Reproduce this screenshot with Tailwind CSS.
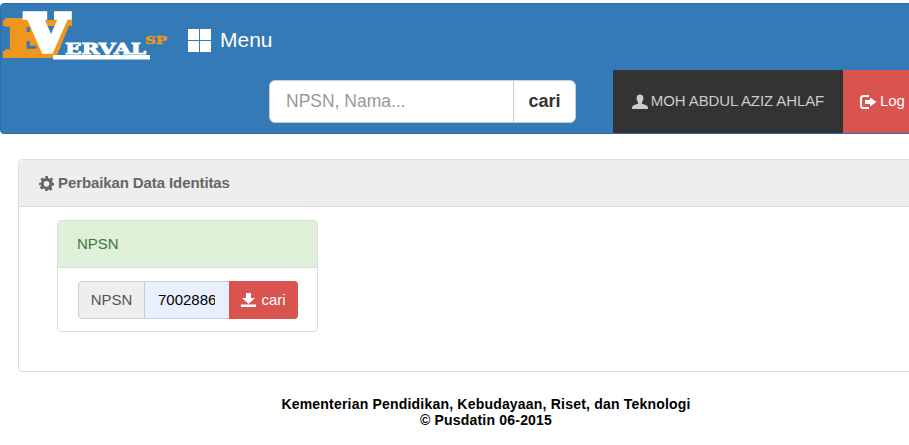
<!DOCTYPE html>
<html>
<head>
<meta charset="utf-8">
<script src="https://cdn.jsdelivr.net/npm/@tailwindcss/browser@4"></script>
</head>
<body class="bg-white font-['Liberation_Sans',Arial,sans-serif] text-[15px] text-[#333]">
<div class="w-[909px] h-[445px] overflow-hidden">
<div class="w-[972px] pt-[3px]">
  <nav class="h-[131px] bg-[#337ab7] border border-[#2e6da4] rounded-[4px] flex flex-col">
    <div class="h-[66px] flex items-start">
      <svg class="shrink-0" width="170" height="62" viewBox="1 4 170 62">
        <rect x="3" y="20" width="69" height="6" fill="#ee961d"/>
        <rect x="12" y="20" width="11" height="38" fill="#ee961d"/>
        <rect x="3" y="51" width="50" height="7" fill="#ee961d"/>
        <text x="6" y="55" font-family="DejaVu Serif" font-weight="700" font-size="46" fill="#ee961d" stroke="#ee961d" stroke-width="6" stroke-linejoin="miter" textLength="40" lengthAdjust="spacingAndGlyphs">E</text>
        <polygon points="64,20 72,20 72,26 69,26 56,58 50,58" fill="#ee961d"/>
        <text x="26" y="51" font-family="DejaVu Serif" font-weight="700" font-size="50" fill="#fff" stroke="#fff" stroke-width="5.500" stroke-linejoin="miter" textLength="42" lengthAdjust="spacingAndGlyphs">V</text>
        <rect x="53" y="55" width="97" height="4.500" fill="#fff"/>
        <text x="65" y="54" font-family="DejaVu Serif" font-weight="700" font-size="15" fill="#fff" stroke="#fff" stroke-width="0.800" textLength="81" lengthAdjust="spacingAndGlyphs">ERVAL</text>
        <text x="145" y="44" font-family="DejaVu Serif" font-weight="700" font-size="11" fill="#ee961d" stroke="#ee961d" stroke-width="0.500" textLength="22" lengthAdjust="spacingAndGlyphs">SP</text>
      </svg>
      <div class="ml-[17px] mt-[21px] flex items-center text-white text-[21px] leading-[30px]">
        <svg class="mr-[9px]" width="23" height="23" viewBox="0 0 23 23" fill="#fff">
          <rect width="11" height="11"/><rect x="12" width="11" height="11"/><rect y="12" width="11" height="11"/><rect x="12" y="12" width="11" height="11"/>
        </svg>
        Menu
      </div>
    </div>
    <div class="h-[63px] flex">
      <div class="ml-[268px] mt-[10px] w-[307px] h-[43px] flex bg-white rounded-[6px] text-[18px] border border-[#ccc]">
        <div class="w-[244px] pl-[16px] text-[17.5px] text-[#999] leading-[41px] border-r border-[#ccc]">NPSN, Nama...</div>
        <div class="flex-1 text-center font-bold text-[#333] leading-[41px]">cari</div>
      </div>
      <div class="ml-[37px] w-[230px] bg-[#333] text-[#ccc] flex items-center justify-center gap-[3px] tracking-[-0.1px]">
        <svg width="16" height="16" viewBox="0 0 16 16" fill="#ccc"><path d="M8 0.5c2.400 0 3.600 1.800 3.400 4.200-.1 1.400-.7 2.600-1.500 3.300v1.500c.5.500 4.600 1.500 5.600 2.700.4.600.5 1.800.5 2.800H0c0-1 .1-2.200.5-2.800 1-1.200 5.100-2.200 5.600-2.700V8c-.8-.7-1.400-1.900-1.500-3.300C4.400 2.300 5.600.5 8 .5z"/></svg>
        MOH ABDUL AZIZ AHLAF
      </div>
      <div class="flex-1 bg-[#d9534f] text-white flex items-center pl-[17px] gap-[3px] whitespace-nowrap">
        <svg width="17" height="14" viewBox="0 0 17 14" fill="#fff"><path d="M3 0h6v2H3.500C2.700 2 2 2.700 2 3.500v7c0 .8.700 1.500 1.500 1.500H9v2H3c-1.700 0-3-1.300-3-3V3c0-1.700 1.300-3 3-3z"/><path d="M10 2.500 16.500 7 10 11.500V9H5V5h5z"/></svg>
        <span class="tracking-[-0.1px] [word-spacing:3px]">Log Out</span>
      </div>
    </div>
  </nav>
  <section class="mt-[25px] mx-[18px] h-[213px] bg-white border border-[#ddd] rounded-[4px]">
    <header class="h-[47px] bg-[#eee] border-b border-[#ddd] rounded-t-[4px] pl-[20px] flex items-center gap-[4px] font-bold text-[#666] tracking-[-0.1px]">
      <svg width="15" height="15" viewBox="0 0 24 24" fill="#666"><path fill-rule="evenodd" d="M10 0h4l.7 3.300 2.200.9L19.800 2.400l2.800 2.800-1.800 2.900.9 2.200L24 11v4l-3.300.6-.9 2.200 1.800 2.900-2.800 2.800-2.900-1.800-2.200.9L14 24h-4l-.7-3.300-2.200-.9-2.900 1.800-2.800-2.800 1.800-2.900-.9-2.200L0 15v-4l3.300-.7.900-2.200L2.400 5.200l2.800-2.800 2.900 1.800 2.200-.9zM12 8a4.500 4.500 0 1 0 0 9 4.500 4.500 0 0 0 0-9z"/></svg>
      Perbaikan Data Identitas
    </header>
    <div class="ml-[38px] mt-[13px] w-[261px] h-[112px] border border-[#ddd] rounded-[4px] overflow-hidden">
      <div class="h-[47px] bg-[#dff0d8] border-b border-[#ddd] text-[#3c763d] pl-[19px] leading-[46px]">NPSN</div>
      <div class="pl-[20px] pt-[13px]">
        <div class="w-[220px] h-[38px] flex rounded-[4px]">
          <div class="w-[67px] bg-[#eee] border border-[#ccc] rounded-l-[4px] text-center leading-[36px] text-[#555]">NPSN</div>
          <div class="w-[84px] bg-[#e8f0fe] border-y border-[#ccc] pl-[13px] leading-[36px] text-black">
            <div class="w-[57px] overflow-hidden whitespace-nowrap">700288600</div>
          </div>
          <div class="flex-1 bg-[#d9534f] rounded-r-[4px] text-white flex items-center justify-center gap-[5px]">
            <svg width="15" height="14" viewBox="0 0 15 14" fill="#fff"><path d="M5 0h5v5h4l-6.500 6L1 5h4z"/><rect y="11.500" width="15" height="2.500"/></svg>
            cari
          </div>
        </div>
      </div>
    </div>
  </section>
  <footer class="mt-[24px] text-center text-sm font-bold text-black leading-[16px] tracking-[0.2px]">
    <p>Kementerian Pendidikan, Kebudayaan, Riset, dan Teknologi</p>
    <p>© Pusdatin 06-2015</p>
  </footer>
</div>
</div>
</body>
</html>
